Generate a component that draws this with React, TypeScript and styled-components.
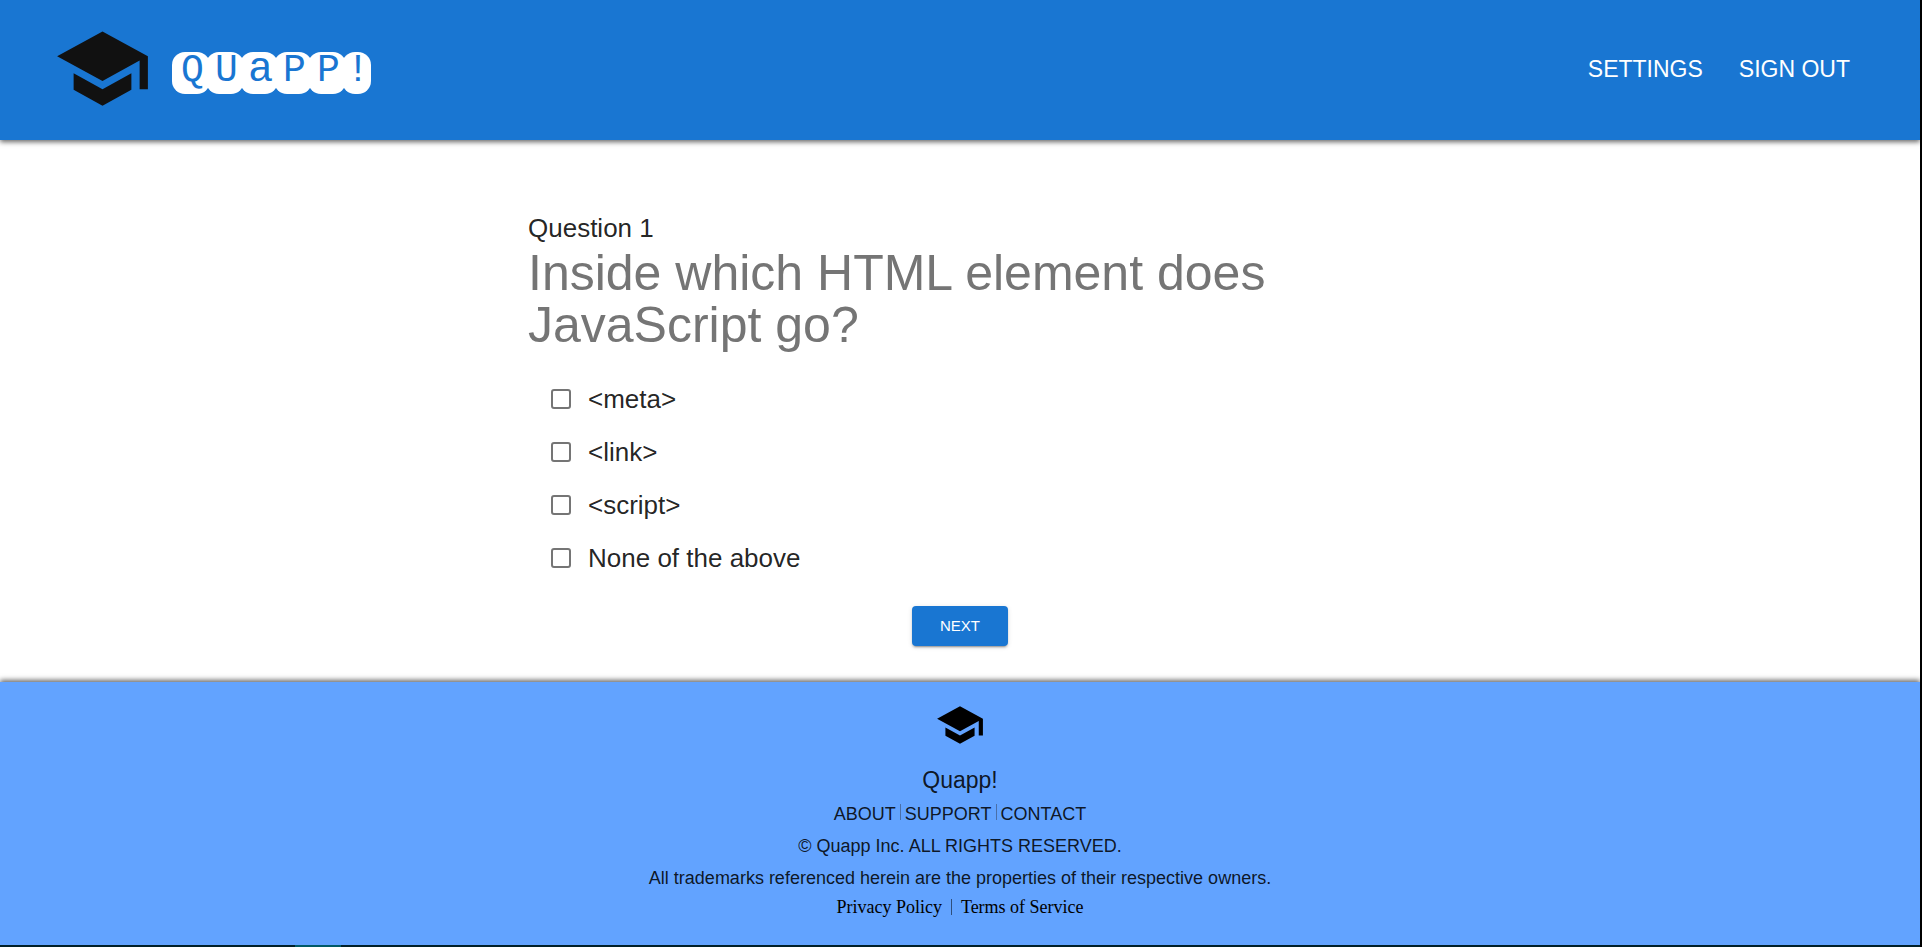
import React from 'react';
import styled, { createGlobalStyle } from 'styled-components';

const colors = {
  primary: '#1976d2',
  footer: '#62a3ff',
  text: 'rgba(0, 0, 0, 0.87)',
  muted: '#757575',
};

const GlobalStyle = createGlobalStyle`
  *, *::before, *::after { box-sizing: border-box; }
  body {
    margin: 0;
    background: #fff;
    color: ${colors.text};
    font-family: 'Liberation Sans', Arial, sans-serif;
  }
  a { color: inherit; text-decoration: none; }
`;

const Page = styled.div`
  min-height: 100vh;
  display: flex;
  flex-direction: column;
  border-right: 2px solid #000;
`;

const Header = styled.header`
  display: flex;
  align-items: center;
  justify-content: space-between;
  height: 140px;
  padding: 0 70px 3px 53px;
  background: ${colors.primary};
  box-shadow: 0 2px 5px rgba(0, 0, 0, 0.6);
`;

const Brand = styled.a`
  display: flex;
  align-items: center;
  gap: 20px;
`;

const Wordmark = styled.span`
  display: flex;
  padding-top: 9px;
`;

const Letter = styled.span<{ $narrow?: boolean; $tall?: boolean }>`
  display: flex;
  justify-content: center;
  width: ${(p) => (p.$narrow ? 29 : 38)}px;
  height: 42px;
  margin-right: -4px;
  padding-left: 3px;
  border-radius: 13px;
  background: #fff;
  color: ${colors.primary};
  font-family: 'Liberation Mono', 'Courier New', monospace;
  font-size: ${(p) => (p.$tall ? 42 : 38)}px;
  line-height: ${(p) => (p.$tall ? 36 : 38)}px;
`;

const Nav = styled.nav`
  display: flex;
  gap: 36px;
  color: #fff;
  font-size: 23px;
  line-height: 28px;
`;

const Main = styled.main`
  flex: 1;
  width: 45%;
  min-width: 320px;
  margin: 0 auto;
  padding: 72px 0 36px;
`;

const Quiz = styled.form`
  display: flex;
  flex-direction: column;
`;

const Counter = styled.p`
  margin: 0;
  font-size: 26px;
  line-height: 32px;
`;

const Question = styled.h1`
  margin: 3px 0 0;
  color: ${colors.muted};
  font-size: 50px;
  font-weight: 400;
  line-height: 52px;
`;

const Options = styled.div`
  display: flex;
  flex-direction: column;
  padding: 21px 0 22px 23px;
`;

const Option = styled.label`
  display: flex;
  align-items: center;
  align-self: flex-start;
  gap: 17px;
  height: 53px;
  font-size: 26px;
  line-height: 32px;
`;

const Checkbox = styled.input`
  appearance: none;
  flex: none;
  width: 20px;
  height: 20px;
  margin: 0;
  border: 2px solid ${colors.muted};
  border-radius: 3px;
  &:checked { background: ${colors.primary}; border-color: ${colors.primary}; }
`;

const NextButton = styled.button`
  align-self: center;
  width: 96px;
  height: 40px;
  padding: 0;
  border: 0;
  border-radius: 4px;
  background: ${colors.primary};
  color: #fff;
  font: 400 15px/26px 'Liberation Sans', Arial, sans-serif;
  box-shadow: 0 3px 1px -2px rgba(0, 0, 0, 0.2), 0 2px 2px 0 rgba(0, 0, 0, 0.14),
    0 1px 5px 0 rgba(0, 0, 0, 0.12);
`;

const Footer = styled.footer`
  display: flex;
  flex-direction: column;
  align-items: center;
  padding: 18px 0 25px;
  background: ${colors.footer};
  box-shadow: 0 -2px 5px rgba(0, 0, 0, 0.6);
  font-size: 18px;
  line-height: 32px;
  text-align: center;
`;

const FooterTitle = styled.h2`
  margin: 14px 0 2px;
  font-size: 23px;
  font-weight: 400;
  line-height: 32px;
`;

const FooterText = styled.p`
  margin: 0;
`;

const LinkRow = styled.div<{ $legal?: boolean }>`
  display: flex;
  align-items: ${(p) => (p.$legal ? 'center' : 'baseline')};
  gap: ${(p) => (p.$legal ? 9 : 4)}px;
  color: ${(p) => (p.$legal ? '#000' : 'inherit')};
  font-family: ${(p) => (p.$legal ? "'Liberation Serif', 'Times New Roman', serif" : 'inherit')};
  line-height: ${(p) => (p.$legal ? 26 : 32)}px;
`;

const Divider = styled.span<{ $dark?: boolean }>`
  width: 1px;
  height: 16px;
  background: ${(p) => (p.$dark ? '#2f4f7c' : '#4a6fa8')};
`;

const Taskbar = styled.div`
  display: flex;
  height: 2px;
  padding-left: 295px;
  background: #00202a;
`;

const TaskbarItem = styled.span`
  width: 46px;
  background: #005a68;
`;

const SchoolIcon = ({ size, color }: { size: number; color: string }) => (
  <svg width={size} height={size} viewBox="0 0 24 24" fill={color} aria-hidden="true">
    <path d="M5 13.18v4L12 21l7-3.82v-4L12 17l-7-3.82zM12 3 1 9l11 6 9-4.91V17h2V9L12 3z" />
  </svg>
);

const answers = ['<meta>', '<link>', '<script>', 'None of the above'];

export default function App() {
  return (
    <>
      <GlobalStyle />
      <Page>
        <Header>
          <Brand href="#home">
            <SchoolIcon size={99} color="#111" />
            <Wordmark>
              <Letter>Q</Letter>
              <Letter>U</Letter>
              <Letter $tall>a</Letter>
              <Letter>P</Letter>
              <Letter>P</Letter>
              <Letter $narrow>!</Letter>
            </Wordmark>
          </Brand>
          <Nav>
            <a href="#settings">SETTINGS</a>
            <a href="#sign-out">SIGN OUT</a>
          </Nav>
        </Header>
        <Main>
          <Quiz onSubmit={(e) => e.preventDefault()}>
            <Counter>Question 1</Counter>
            <Question>Inside which HTML element does JavaScript go?</Question>
            <Options>
              {answers.map((answer, i) => (
                <Option key={answer} htmlFor={`answer-${i}`}>
                  <Checkbox type="checkbox" id={`answer-${i}`} name="answer" value={answer} />
                  {answer}
                </Option>
              ))}
            </Options>
            <NextButton type="submit">NEXT</NextButton>
          </Quiz>
        </Main>
        <Footer>
          <SchoolIcon size={50} color="#000" />
          <FooterTitle>Quapp!</FooterTitle>
          <LinkRow>
            <a href="#about">ABOUT</a>
            <Divider />
            <a href="#support">SUPPORT</a>
            <Divider />
            <a href="#contact">CONTACT</a>
          </LinkRow>
          <FooterText>© Quapp Inc. ALL RIGHTS RESERVED.</FooterText>
          <FooterText>All trademarks referenced herein are the properties of their respective owners.</FooterText>
          <LinkRow $legal>
            <a href="#privacy">Privacy Policy</a>
            <Divider $dark />
            <a href="#terms">Terms of Service</a>
          </LinkRow>
        </Footer>
        <Taskbar>
          <TaskbarItem />
        </Taskbar>
      </Page>
    </>
  );
}
